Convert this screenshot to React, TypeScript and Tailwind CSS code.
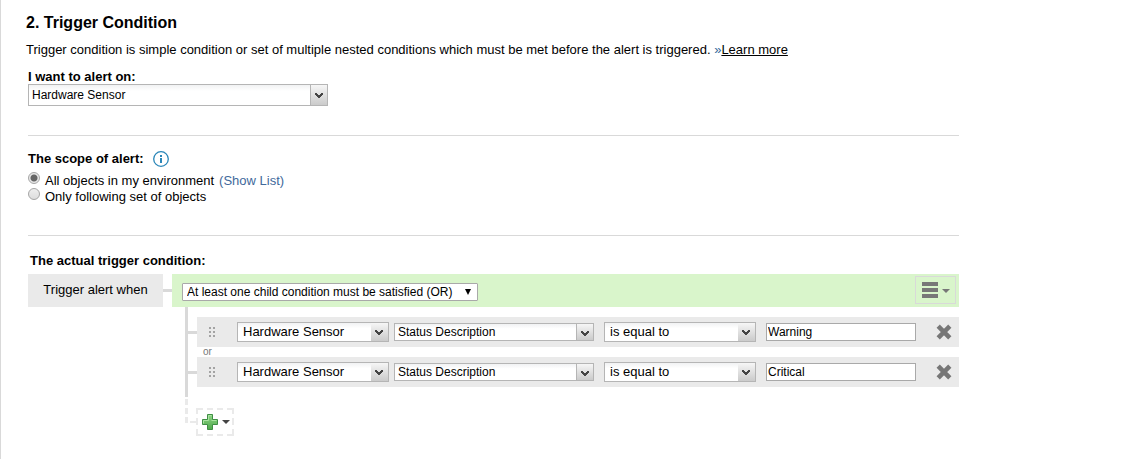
import React, { useState } from "react";

const conditions = [
  { id: "warning", value: "Warning" },
  { id: "critical", value: "Critical" },
];

function Chevron() {
  return (
    <svg width="8" height="5" viewBox="0 0 8 5" shapeRendering="crispEdges">
      <path
        d="M0 0h2v1h1v1h2V1h1V0h2v2H7v1H6v1H5v1H3V4H2V3H1V2H0z"
        fill="#444"
      />
    </svg>
  );
}

function Caret({ className }: { className: string }) {
  return (
    <svg width="8" height="4" viewBox="0 0 8 4" className={className}>
      <path d="M0 0h8L4 4z" fill="currentColor" />
    </svg>
  );
}

function Combo({
  label,
  option,
  id,
  width,
  field,
  arrow = "",
}: {
  label?: string;
  option: string;
  id?: string;
  width: string;
  field: string;
  arrow?: string;
}) {
  return (
    <div className={`relative shrink-0 ${width}`}>
      <select
        id={id}
        aria-label={label}
        className={`block w-full appearance-none border border-[#b5b5b5] bg-linear-to-b from-[#f1f2f3] to-white to-30% pr-5 ${field}`}
      >
        <option>{option}</option>
      </select>
      <span
        className={`pointer-events-none absolute inset-y-px right-px flex w-[17px] items-center bg-linear-to-b from-[#f6f6f6] to-[#cbcbcb] pl-1 ${arrow}`}
      >
        <Chevron />
      </span>
    </div>
  );
}

function DragHandle() {
  return (
    <svg
      width="7"
      height="10"
      viewBox="0 0 7 10"
      className="shrink-0 text-[#a3a3a3]"
      shapeRendering="crispEdges"
    >
      <path
        d="M0 0h2v2H0zM4 0h2v2H4zM0 4h2v2H0zM4 4h2v2H4zM0 8h2v2H0zM4 8h2v2H4z"
        fill="currentColor"
      />
    </svg>
  );
}

function ConditionRow({ value }: { value: string }) {
  return (
    <div className="flex">
      <div className="flex w-3 shrink-0 items-center border-l-3 border-[#d9d9d9]">
        <span className="h-[3px] flex-1 bg-[#d9d9d9]" />
      </div>
      <div className="flex h-[30px] flex-1 items-center bg-[#eaeaea] pl-3">
        <DragHandle />
        <div className="ml-[21px] flex items-center">
          <Combo
            label="Object type"
            option="Hardware Sensor"
            width="w-[152px]"
            field="h-5 pl-[5px] text-[13px]"
          />
          <div className="ml-[5px]">
            <Combo
              label="Property"
              option="Status Description"
              width="w-[200px]"
              field="h-[18px] pl-[3px] text-[12px]"
              arrow="border-l border-[#b5b5b5] pt-0.5"
            />
          </div>
          <div className="ml-[10px]">
            <Combo
              label="Operator"
              option="is equal to"
              width="w-[152px]"
              field="h-5 pl-[5px] text-[13px]"
            />
          </div>
          <input
            type="text"
            aria-label="Value"
            defaultValue={value}
            className="ml-[10px] h-[18px] w-[150px] border border-[#a9a9a9] bg-white pl-px text-[12px]"
          />
        </div>
        <button
          type="button"
          aria-label="Remove condition"
          className="mr-[7px] ml-auto cursor-pointer"
        >
          <svg width="16" height="16" viewBox="0 0 16 16">
            <path
              d="M2.2 2.2l11.6 11.6M13.8 2.2l-11.6 11.6"
              stroke="#777"
              strokeWidth="4.6"
            />
          </svg>
        </button>
      </div>
    </div>
  );
}

function App() {
  const [scope, setScope] = useState("all");

  const radio =
    "size-3 shrink-0 appearance-none rounded-full border border-[#a5a5a5] bg-linear-to-b from-[#eee] to-[#ddd] checked:bg-[radial-gradient(circle,#666_3px,#e8e8e8_4px)]";

  return (
    <main className="min-h-screen border-l border-[#d9d9d9] bg-white font-['Liberation_Sans',Arial,sans-serif] text-[13px] leading-4 text-black">
      <div className="max-w-[958px] pt-[13px] pl-[27px]">
        <h1 className="-ml-0.5 text-[16px] leading-5 font-bold">
          2. Trigger Condition
        </h1>
        <p className="mt-[9px] -ml-0.5">
          Trigger condition is simple condition or set of multiple nested
          conditions which must be met before the alert is triggered.{" "}
          <span className="text-[#336699]">»</span>
          <a href="#learn" className="underline">
            Learn more
          </a>
        </p>

        <label
          htmlFor="alert-on"
          className="mt-[11px] block leading-[15px] font-bold"
        >
          I want to alert on:
        </label>
        <Combo
          id="alert-on"
          option="Hardware Sensor"
          width="w-[300px]"
          field="h-[22px] pl-[3px] text-[12px]"
          arrow="border-l border-[#b5b5b5]"
        />

        <hr className="mt-[29px] border-[#d9d9d9]" />

        <fieldset className="mt-[15px]">
          <legend className="flex items-center gap-[9px] font-bold">
            The scope of alert:
            <svg width="16" height="16" viewBox="0 0 16 16" fill="none">
              <circle cx="8" cy="8" r="7.3" stroke="#2a86b8" strokeWidth="1.3" />
              <path d="M7 4h2v2H7zM7 7h2v5H7z" fill="#2a86b8" />
            </svg>
          </legend>
          <div className="mt-[5px] flex gap-[5px]">
            <input
              id="scope-all"
              type="radio"
              name="scope"
              checked={scope === "all"}
              onChange={() => setScope("all")}
              className={radio}
            />
            <label htmlFor="scope-all" className="pt-px leading-[15px]">
              All objects in my environment
            </label>
            <a href="#list" className="pt-px leading-[15px] text-[#41699b]">
              (Show List)
            </a>
          </div>
          <div className="flex gap-[5px]">
            <input
              id="scope-set"
              type="radio"
              name="scope"
              checked={scope === "set"}
              onChange={() => setScope("set")}
              className={radio}
            />
            <label htmlFor="scope-set" className="pt-px leading-[15px]">
              Only following set of objects
            </label>
          </div>
        </fieldset>

        <hr className="mt-[31px] border-[#d9d9d9]" />

        <h2 className="mt-[17px] pl-0.5 font-bold">
          The actual trigger condition:
        </h2>

        <div className="mt-[5px] flex h-[33px] items-center">
          <div className="flex h-full w-[135px] shrink-0 items-center justify-center bg-[#eaeaea] pb-0.5">
            Trigger alert when
          </div>
          <span className="h-[3px] w-[9px] shrink-0 bg-[#d9d9d9]" />
          <div className="flex h-full flex-1 items-center bg-[#d9f5cb] pr-[3px] pl-[10px]">
            <div className="relative mt-0.5 w-[296px]">
              <select
                aria-label="Child condition rule"
                className="block h-[18px] w-full appearance-none rounded-[1px] border border-[#a9a9a9] bg-white pl-1 text-[12px]"
              >
                <option>
                  At least one child condition must be satisfied (OR)
                </option>
              </select>
              <svg
                width="6"
                height="6"
                viewBox="0 0 6 6"
                className="pointer-events-none absolute top-[6px] right-[7px]"
              >
                <path d="M0 0h6L3 6z" fill="#000" />
              </svg>
            </div>
            <button
              type="button"
              aria-label="Group actions"
              className="mb-px ml-auto flex h-7 w-[41px] cursor-pointer items-center justify-center gap-1 border border-[#d9d9d9] text-[#777]"
            >
              <svg width="16" height="16" viewBox="0 0 16 16">
                <path
                  d="M0 0h16v4H0zM0 6h16v4H0zM0 12h16v4H0z"
                  fill="currentColor"
                />
              </svg>
              <Caret className="mt-0.5" />
            </button>
          </div>
        </div>

        <div className="ml-[157px]">
          {conditions.map((condition, index) => (
            <div key={condition.id}>
              <div className="h-[10px] border-l-3 border-[#d9d9d9] pl-[15px] text-[10px] leading-[10px] text-[#777]">
                {index > 0 && "or"}
              </div>
              <ConditionRow value={condition.value} />
            </div>
          ))}
          <div className="h-[10px] border-l-3 border-[#d9d9d9]" />
          <div className="flex">
            <svg
              width="11"
              height="39"
              viewBox="0 0 11 39"
              className="shrink-0"
              shapeRendering="crispEdges"
            >
              <path
                d="M0 2h3v6H0zM0 11h3v6H0zM0 20h3v6H0zM5 24h6v2H5z"
                fill="#eaeaea"
              />
            </svg>
            <button
              type="button"
              aria-label="Add condition"
              className="relative mt-[11px] flex h-7 w-[38px] cursor-pointer items-center gap-1 pl-[6px]"
            >
              <svg
                width="38"
                height="28"
                viewBox="0 0 38 28"
                className="absolute inset-0"
                shapeRendering="crispEdges"
              >
                <path
                  d="M0 0h7v2H2v4H0zM11 0h6v2h-6zM21 0h6v2h-6zM31 0h7v6h-2V2h-5zM0 10h2v7H0zM36 10h2v7h-2zM0 21h2v5h5v2H0zM11 26h6v2h-6zM21 26h6v2h-6zM31 26h5v-5h2v7h-7z"
                  fill="#eaeaea"
                />
              </svg>
              <svg width="16" height="16" viewBox="0 0 16 16">
                <defs>
                  <linearGradient id="plus" x1="0" y1="0" x2="0" y2="1">
                    <stop offset="0" stopColor="#8fd686" />
                    <stop offset="1" stopColor="#4fa94b" />
                  </linearGradient>
                </defs>
                <path
                  d="M5.5.5h5v5h5v5h-5v5h-5v-5h-5v-5h5z"
                  fill="url(#plus)"
                  stroke="#3f8f45"
                />
                <path
                  d="M6.5 6.5v-5h3M1.5 9.5v-3h5M9.5 6.5h5"
                  stroke="#a9e3a0"
                  fill="none"
                />
              </svg>
              <Caret className="text-[#444]" />
            </button>
          </div>
        </div>
      </div>
    </main>
  );
}

export default App;
